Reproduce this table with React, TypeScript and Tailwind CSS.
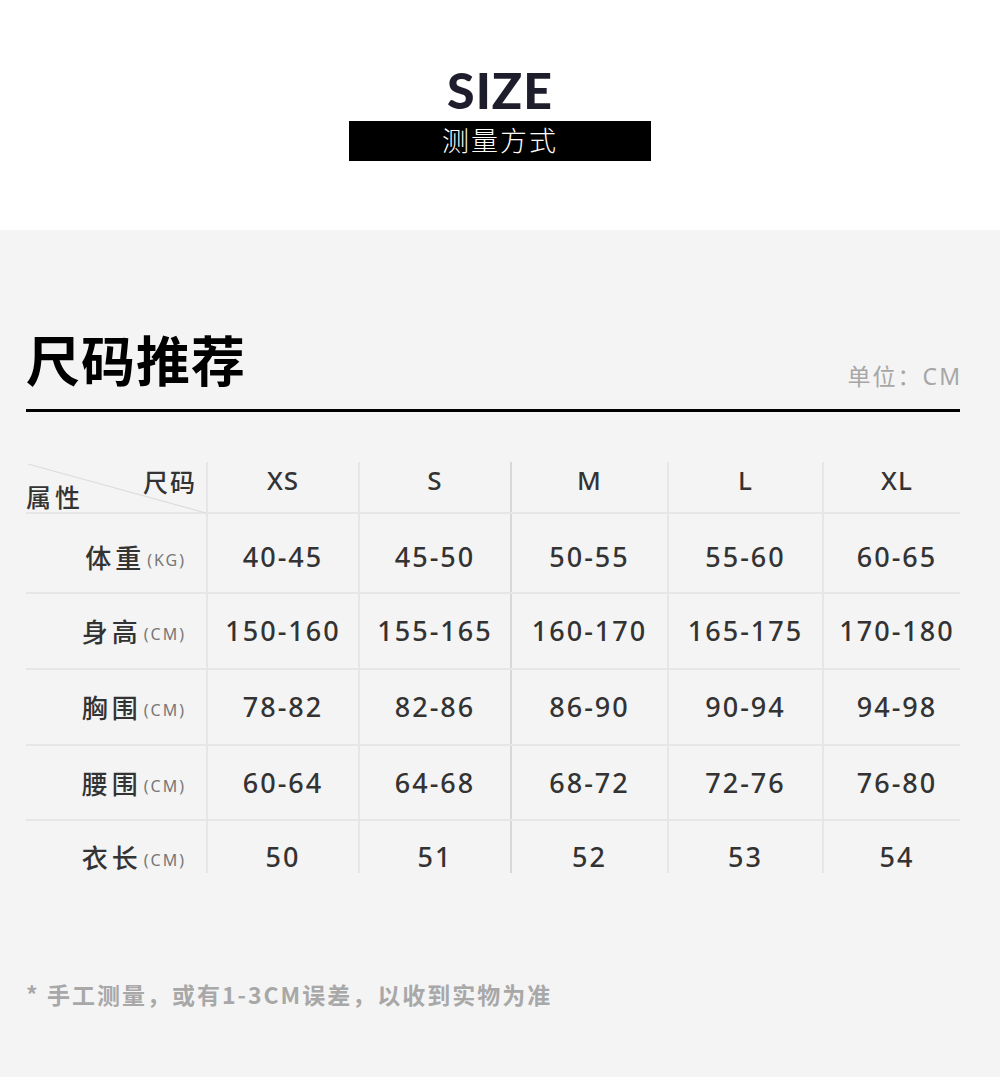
const sizes = ['XS', 'S', 'M', 'L', 'XL'];

const rows = [
  { label: '体重', unit: '(KG)', values: ['40-45', '45-50', '50-55', '55-60', '60-65'] },
  { label: '身高', unit: '(CM)', values: ['150-160', '155-165', '160-170', '165-175', '170-180'] },
  { label: '胸围', unit: '(CM)', values: ['78-82', '82-86', '86-90', '90-94', '94-98'] },
  { label: '腰围', unit: '(CM)', values: ['60-64', '64-68', '68-72', '72-76', '76-80'] },
  { label: '衣长', unit: '(CM)', values: ['50', '51', '52', '53', '54'] },
];

// column widths & divider colour per column (the one before M is darker)
const cols = [
  { w: 'w-[152px]', line: 'border-[#e6e6e6]' },
  { w: 'w-[152px]', line: 'border-[#e6e6e6]' },
  { w: 'w-[157px]', line: 'border-[#d8d8d8]' },
  { w: 'w-[155px]', line: 'border-[#e6e6e6]' },
  { w: 'w-[138px] pl-[10px]', line: 'border-[#e6e6e6]' },
];

const rowStyles = [
  { row: 'h-[80px] border-b-2 border-[#e6e6e6]', cell: 'pt-[8px]' },
  { row: 'h-[76px] border-b-2 border-[#e6e6e6]', cell: '' },
  { row: 'h-[76px] border-b-2 border-[#e6e6e6]', cell: '' },
  { row: 'h-[75px] border-b-2 border-[#e6e6e6]', cell: '' },
  { row: 'h-[52px]', cell: 'pt-[20px]' },
];

const cjk = { fontFamily: '"Noto Sans CJK SC", "Noto Sans", sans-serif' };
const latin = { fontFamily: '"Noto Sans", "Noto Sans CJK SC", sans-serif' };

export default function App() {
  return (
    <div className="w-[1000px] bg-white" style={cjk}>
      {/* Top heading */}
      <div className="h-[230px] flex flex-col items-center pt-[60px]">
        <div
          className="text-[50px] leading-[60px] font-black text-[#1e1d2b] tracking-[1px]"
          style={{ fontFamily: 'Lato, "Noto Sans", sans-serif' }}>
          SIZE
        </div>
        <div className="w-[302px] h-[40px] mt-[1px] bg-black flex items-center justify-center text-white text-[27px] leading-[36px] font-light tracking-[2px] pb-[2px]">
          测量方式
        </div>
      </div>

      {/* Grey panel */}
      <div className="h-[847px] bg-[#f4f4f4] px-[26px] pt-[96px]">
        <div className="w-[934px] flex items-end justify-between">
          <h2 className="text-[54px] leading-[66px] font-bold text-black tracking-[1px]">尺码推荐</h2>
          <div className="text-[23px] leading-[28px] text-[#a6a6a6] tracking-[2px] mb-[2px] mr-[-2px]">
            单位：<span style={latin}>CM</span>
          </div>
        </div>
        <div className="w-[934px] h-[3px] bg-black mt-[17px]" />

        {/* Table */}
        <div className="w-[934px] mt-[50px]">
          {/* Header */}
          <div className="flex h-[52px] border-b-2 border-[#e6e6e6]">
            <div className="relative w-[180px] shrink-0">
              <svg className="absolute inset-0" width="180" height="52">
                <line x1="2" y1="2" x2="180" y2="51" stroke="#dcdcdc" strokeWidth="1.2" />
              </svg>
              <span className="absolute right-[9px] top-[2px] text-[25px] leading-[34px] font-medium text-[#333] tracking-[2px]">
                尺码
              </span>
              <span className="absolute left-0 top-[17px] text-[25px] leading-[34px] font-medium text-[#333] tracking-[4px]">
                属性
              </span>
            </div>
            {sizes.map((s, i) => (
              <div
                key={s}
                className={`${cols[i].w} shrink-0 border-l-2 ${cols[i].line} flex justify-center pt-[2px] text-[26px] leading-[32px] font-medium text-[#333] tracking-[1px]`}
                style={latin}>
                {s}
              </div>
            ))}
          </div>

          {rows.map((row, r) => (
            <div key={row.label} className={`flex ${rowStyles[r].row}`}>
              <div className={`w-[180px] shrink-0 flex items-center justify-end pr-[20px] ${rowStyles[r].cell}`}>
                <span className="text-[26px] leading-[34px] font-medium text-[#333] tracking-[4px]">
                  {row.label}
                </span>
                <span className="text-[16px] leading-[20px] text-[#777] tracking-[2px] mt-[6px] ml-[2px]" style={latin}>
                  {row.unit}
                </span>
              </div>
              {row.values.map((v, i) => (
                <div
                  key={i}
                  className={`${cols[i].w} shrink-0 border-l-2 ${cols[i].line} flex items-center justify-center text-[27px] leading-[34px] font-medium text-[#333] tracking-[2px] ${rowStyles[r].cell}`}
                  style={latin}>
                  {v}
                </div>
              ))}
            </div>
          ))}
        </div>

        <p className="mt-[106px] text-[23px] leading-[30px] font-bold text-[#a8a8a8] tracking-[2px]">
          * 手工测量，或有1-3CM误差，以收到实物为准
        </p>
      </div>
      <div className="h-[12px] bg-white" />
    </div>
  );
}
